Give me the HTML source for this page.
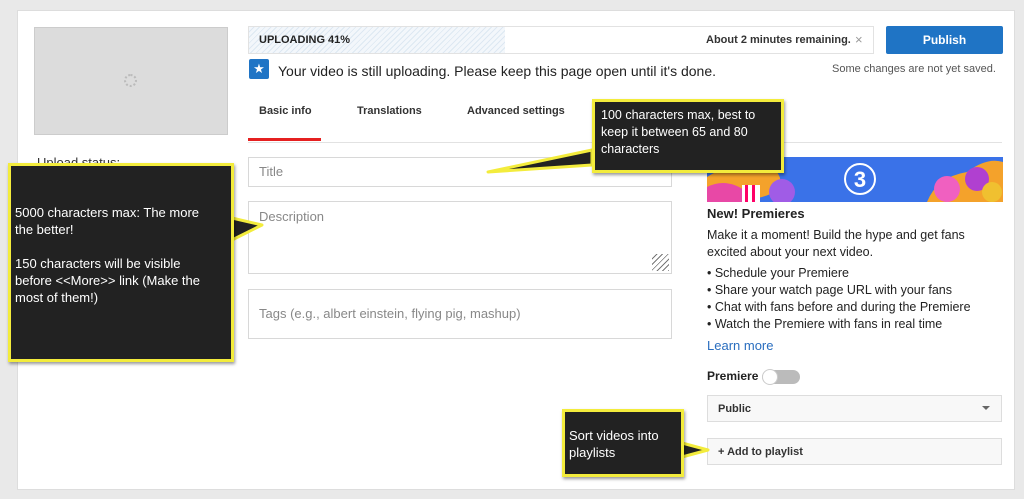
<!DOCTYPE html>
<html><head><meta charset="utf-8"><style>
*{box-sizing:border-box;margin:0;padding:0}
body{width:1024px;height:499px;background:#e9e9e9;font-family:"Liberation Sans",sans-serif;position:relative;overflow:hidden;color:#222}
.a{position:absolute}
.panel{left:17px;top:10px;width:998px;height:480px;background:#fff;border:1px solid #ddd}
.inp{border:1px solid #d8d8d8;background:#fff;color:#888;font-size:13px;padding-left:10px}
.call{background:#222;border:3px solid #f3ec3c;color:#fff;font-size:12.5px;line-height:17px;box-shadow:1px 2px 3px rgba(0,0,0,.4)}
.t13{font-size:12.5px;color:#222}
</style></head><body>
<div class="a panel"></div>
<div class="a" style="left:34px;top:27px;width:194px;height:108px;background:#dcdcdc;border:1px solid #ccc"></div>
<div class="a" style="left:124px;top:74px;width:13px;height:13px;border:2px dotted #bbb;border-radius:50%"></div>
<div class="a" style="left:37px;top:155px;font-size:13px;color:#333">Upload status:</div>

<div class="a" style="left:248px;top:26px;width:626px;height:28px;border:1px solid #e2e2e2;background:#fff"></div>
<div class="a" style="left:249px;top:27px;width:256px;height:26px;background:repeating-linear-gradient(135deg,#f3f7fb 0 3px,#dde8f2 3px 4px)"></div>
<div class="a" style="left:259px;top:34px;font-size:11px;font-weight:bold">UPLOADING 41%</div>
<div class="a" style="left:706px;top:34px;font-size:11px;font-weight:bold;color:#333">About 2 minutes remaining.</div>
<div class="a" style="left:855px;top:32px;font-size:13px;color:#999">×</div>
<div class="a" style="left:886px;top:26px;width:117px;height:28px;background:#1f74c5;border-radius:2px;color:#fff;font-size:12px;font-weight:bold;text-align:center;line-height:28px">Publish</div>
<div class="a" style="left:249px;top:59px;width:20px;height:20px;background:#1f74c5;border-radius:2px;color:#fff;font-size:13px;text-align:center;line-height:20px">★</div>
<div class="a" style="left:278px;top:63px;font-size:14px;color:#222">Your video is still uploading. Please keep this page open until it's done.</div>
<div class="a" style="left:832px;top:63px;font-size:11px;color:#555">Some changes are not yet saved.</div>

<div class="a" style="left:259px;top:105px;font-size:11px;font-weight:bold;color:#333">Basic info</div>
<div class="a" style="left:357px;top:105px;font-size:11px;font-weight:bold;color:#333">Translations</div>
<div class="a" style="left:467px;top:105px;font-size:11px;font-weight:bold;color:#333">Advanced settings</div>
<div class="a" style="left:248px;top:142px;width:754px;height:1px;background:#e2e2e2"></div>
<div class="a" style="left:248px;top:138px;width:73px;height:3px;background:#e52020"></div>

<div class="a inp" style="left:248px;top:157px;width:424px;height:30px;line-height:28px">Title</div>
<div class="a inp" style="left:248px;top:201px;width:424px;height:73px;padding-top:7px">Description</div>
<div class="a" style="left:652px;top:254px;width:17px;height:17px;background:repeating-linear-gradient(135deg,transparent 0 3px,#777 3px 4px)"></div>
<div class="a inp" style="left:248px;top:289px;width:424px;height:50px;line-height:48px">Tags (e.g., albert einstein, flying pig, mashup)</div>

<svg class="a" style="left:707px;top:157px" width="296" height="45">
<rect width="296" height="45" fill="#3a72e8"/>
<path d="M0 20 Q30 0 70 15 Q90 45 0 45Z" fill="#f4a22b"/>
<path d="M0 30 Q20 20 40 35 L40 45 L0 45Z" fill="#e848a6"/>
<rect x="35" y="28" width="18" height="17" fill="#fff"/><rect x="38" y="28" width="3" height="17" fill="#f06"/><rect x="45" y="28" width="3" height="17" fill="#f06"/>
<circle cx="75" cy="35" r="13" fill="#a05ce6"/>
<circle cx="153" cy="22" r="15" fill="none" stroke="#fff" stroke-width="2"/>
<text x="153" y="30" font-size="22" font-weight="bold" fill="#fff" text-anchor="middle" font-family="Liberation Sans">3</text>
<path d="M220 45 Q230 20 260 15 Q280 0 296 5 L296 45Z" fill="#f4a22b"/>
<circle cx="240" cy="32" r="13" fill="#f060c0"/><circle cx="270" cy="22" r="12" fill="#b040d0"/><circle cx="285" cy="35" r="10" fill="#f0c030"/>
</svg>
<div class="a" style="left:707px;top:206px;font-size:13px;font-weight:bold">New! Premieres</div>
<div class="a t13" style="left:707px;top:227px;line-height:17px">Make it a moment! Build the hype and get fans<br>excited about your next video.</div>
<div class="a t13" style="left:707px;top:265px;line-height:17px">• Schedule your Premiere<br>• Share your watch page URL with your fans<br>• Chat with fans before and during the Premiere<br>• Watch the Premiere with fans in real time</div>
<div class="a" style="left:707px;top:338px;font-size:13px;color:#2a6ebf">Learn more</div>
<div class="a" style="left:707px;top:369px;font-size:12px;font-weight:bold">Premiere</div>
<div class="a" style="left:762px;top:370px;width:38px;height:14px;border-radius:7px;background:#bbb"></div>
<div class="a" style="left:762px;top:369px;width:16px;height:16px;border-radius:50%;background:#fff;border:1px solid #ccc"></div>
<div class="a" style="left:707px;top:395px;width:295px;height:27px;background:#f8f8f8;border:1px solid #ddd;font-size:11px;font-weight:bold;color:#333;line-height:26px;padding-left:10px">Public</div>
<div class="a" style="left:982px;top:406px;width:0;height:0;border-left:4px solid transparent;border-right:4px solid transparent;border-top:4px solid #666"></div>
<div class="a" style="left:707px;top:438px;width:295px;height:27px;background:#f8f8f8;border:1px solid #ddd;font-size:11px;font-weight:bold;color:#333;line-height:27px;padding-left:10px">+ Add to playlist</div>

<svg class="a" style="left:0;top:0" width="1024" height="499">
<polygon points="592,150 488,172 592,165" fill="#222" stroke="#f3ec3c" stroke-width="3" stroke-linejoin="round"/>
<polygon points="232,218 262,225 232,240" fill="#222" stroke="#f3ec3c" stroke-width="3" stroke-linejoin="round"/>
<polygon points="682,443 708,450 682,457" fill="#222" stroke="#f3ec3c" stroke-width="3" stroke-linejoin="round"/>
</svg>
<div class="a call" style="left:592px;top:99px;width:192px;height:74px;padding:5px 6px">100 characters max, best to keep it between 65 and 80 characters</div>
<div class="a call" style="left:8px;top:163px;width:226px;height:199px;padding:38px 22px 0 4px;font-size:13px">5000 characters max: The more the better!<br><br>150 characters will be visible before &lt;&lt;More&gt;&gt; link (Make the most of them!)</div>
<div class="a call" style="left:562px;top:409px;width:122px;height:68px;padding:15px 4px 0 4px;font-size:13px">Sort videos into playlists</div>
</body></html>
